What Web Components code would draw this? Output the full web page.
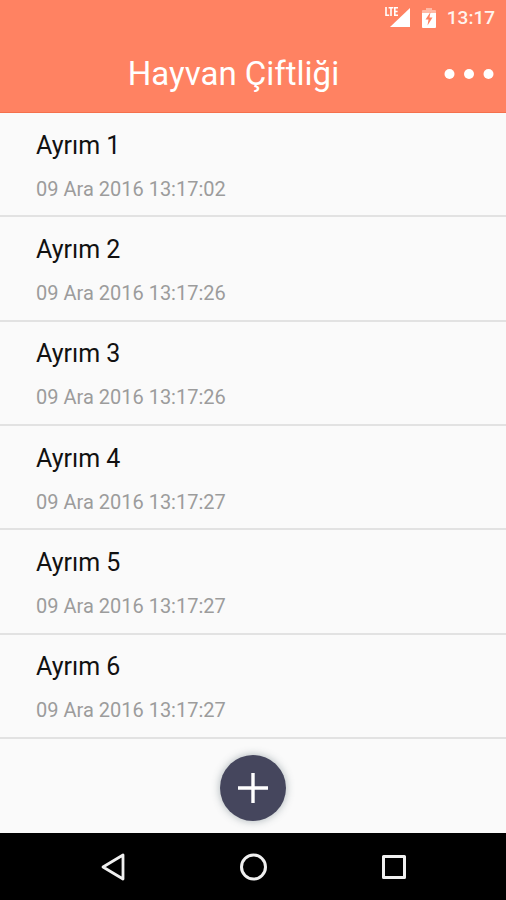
<!DOCTYPE html>
<html lang="tr">
<head>
<meta charset="utf-8">
<meta name="viewport" content="width=device-width, initial-scale=1">
<title>Hayvan Çiftliği</title>
<style>
  body { margin: 0; background: #fafafa; font-family: Roboto, "Noto Sans", sans-serif; }
</style>
</head>
<body>
<chapter-screen>
  <status-bar slot="top" time="13:17"></status-bar>
  <app-header slot="top">Hayvan Çiftliği</app-header>
  <chapter-item>Ayrım 1<time slot="date" datetime="2016-12-09T13:17:02">09 Ara 2016 13:17:02</time></chapter-item>
  <chapter-item>Ayrım 2<time slot="date" datetime="2016-12-09T13:17:26">09 Ara 2016 13:17:26</time></chapter-item>
  <chapter-item>Ayrım 3<time slot="date" datetime="2016-12-09T13:17:26">09 Ara 2016 13:17:26</time></chapter-item>
  <chapter-item>Ayrım 4<time slot="date" datetime="2016-12-09T13:17:27">09 Ara 2016 13:17:27</time></chapter-item>
  <chapter-item>Ayrım 5<time slot="date" datetime="2016-12-09T13:17:27">09 Ara 2016 13:17:27</time></chapter-item>
  <chapter-item>Ayrım 6<time slot="date" datetime="2016-12-09T13:17:27">09 Ara 2016 13:17:27</time></chapter-item>
  <add-bar slot="bottom"></add-bar>
  <system-nav slot="bottom"></system-nav>
</chapter-screen>

<script>
const define = (name, html) => {
  const template = document.createElement('template');
  template.innerHTML = html;
  customElements.define(name, class extends HTMLElement {
    constructor() {
      super();
      this.attachShadow({ mode: 'open' }).append(template.content.cloneNode(true));
    }
    connectedCallback() {
      const clock = this.shadowRoot.querySelector('.clock');
      if (clock) clock.textContent = this.getAttribute('time');
    }
  });
};

define('chapter-screen', `
  <style>
    :host { display: flex; flex-direction: column; min-height: 100vh; }
    header { background: #ff8262; color: #fff; box-sizing: border-box; border-bottom: 1px solid #f5704c; }
    main { flex: 1; display: flex; flex-direction: column; }
  </style>
  <header><slot name="top"></slot></header>
  <main><slot></slot></main>
  <footer><slot name="bottom"></slot></footer>
`);

define('status-bar', `
  <style>
    :host { display: flex; align-items: center; justify-content: flex-end; height: 36px; padding-right: 11px; }
    .lte { width: 27px; height: 22px; }
    .battery { width: 14px; height: 20px; margin: 0 11px; }
    .clock { font-size: 19px; line-height: 24px; font-weight: 500; color: #fff4ee; }
  </style>
  <svg class="lte" viewBox="0 0 27 22" role="img" aria-label="LTE">
    <path d="M26 1V20H6z" fill="#fff"/>
    <path d="M0 0H15V11H0z" fill="#ff8262"/>
    <path d="M2 0V8.200H5.200M4.600 .8H9.400M7 .8V9M14 .8H10.800V8.200H14M10.800 4.500H13.600" fill="none" stroke="#fff" stroke-width="1.600"/>
  </svg>
  <svg class="battery" viewBox="0 0 14 20" role="img" aria-label="Şarj oluyor">
    <path d="M4 0H10V2H13Q14 2 14 3V6H0V3Q0 2 1 2H4z" fill="#ffb9a5"/>
    <path d="M0 5H14V19Q14 20 13 20H1Q0 20 0 19z" fill="#fff"/>
    <path d="M8.500 4L3.500 11.500H6.500L5.500 17.500L10.500 9.500H7.500z" fill="#ff8262"/>
  </svg>
  <span class="clock"></span>
`);

define('app-header', `
  <style>
    :host { display: flex; align-items: center; height: 76px; }
    h1 { flex: 1; margin: 0; padding-left: 36px; text-align: center; font-size: 33px; line-height: 40px; font-weight: 400; }
    button { width: 75px; height: 60px; padding: 0 12px 0 0; border: 0; background: none; color: inherit;
      display: flex; align-items: center; justify-content: flex-end; }
    svg { width: 50px; height: 12px; display: block; }
  </style>
  <h1><slot></slot></h1>
  <button type="button" aria-label="Menü">
    <svg viewBox="0 0 50 12" fill="currentColor"><circle cx="5.500" cy="6" r="5"/><circle cx="25" cy="6" r="5"/><circle cx="44.500" cy="6" r="5"/></svg>
  </button>
`);

define('chapter-item', `
  <style>
    :host { flex: 1; display: flex; flex-direction: column; justify-content: center; gap: 16px;
      box-sizing: border-box; min-height: 96px; padding: 3px 36px 0; border-bottom: 2px solid #e2e2e2; }
    .name { font-size: 25px; line-height: 30px; color: #111; }
    .date { font-size: 20px; line-height: 24px; color: #9c9c9c; }
  </style>
  <div class="name"><slot></slot></div>
  <div class="date"><slot name="date"></slot></div>
`);

define('add-bar', `
  <style>
    :host { display: flex; align-items: center; justify-content: center; height: 94px; padding-top: 4px; box-sizing: border-box; }
    button { width: 66px; height: 66px; padding: 0; border: 0; border-radius: 50%; background: #45465d; color: #fff;
      display: grid; place-items: center; box-shadow: 0 0 8px rgba(70, 90, 100, .45); }
    svg { width: 30px; height: 30px; display: block; }
  </style>
  <button type="button" aria-label="Ekle">
    <svg viewBox="0 0 30 30" fill="none" stroke="currentColor" stroke-width="3.400"><path d="M15 0V30M0 15H30"/></svg>
  </button>
`);

define('system-nav', `
  <style>
    :host { display: block; background: #000; }
    nav { display: flex; justify-content: center; align-items: center; height: 67px; }
    button { flex: 0 1 140px; height: 48px; padding: 0; border: 0; background: none; color: #f0f0f0;
      display: grid; place-items: center; }
    svg { width: 30px; height: 30px; display: block; }
  </style>
  <nav aria-label="Sistem">
    <button type="button" aria-label="Geri"><svg viewBox="0 0 30 30" fill="none" stroke="currentColor" stroke-width="2.800" stroke-linejoin="round"><path d="M25 3V27L5 15z"/></svg></button>
    <button type="button" aria-label="Ana ekran"><svg viewBox="0 0 30 30" fill="none" stroke="currentColor" stroke-width="3"><circle cx="15.500" cy="15" r="12"/></svg></button>
    <button type="button" aria-label="Son uygulamalar"><svg viewBox="0 0 30 30" fill="none" stroke="currentColor" stroke-width="3" stroke-linejoin="round"><path d="M5.500 4.500H26.500V25.500H5.500z"/></svg></button>
  </nav>
`);
</script>
</body>
</html>
